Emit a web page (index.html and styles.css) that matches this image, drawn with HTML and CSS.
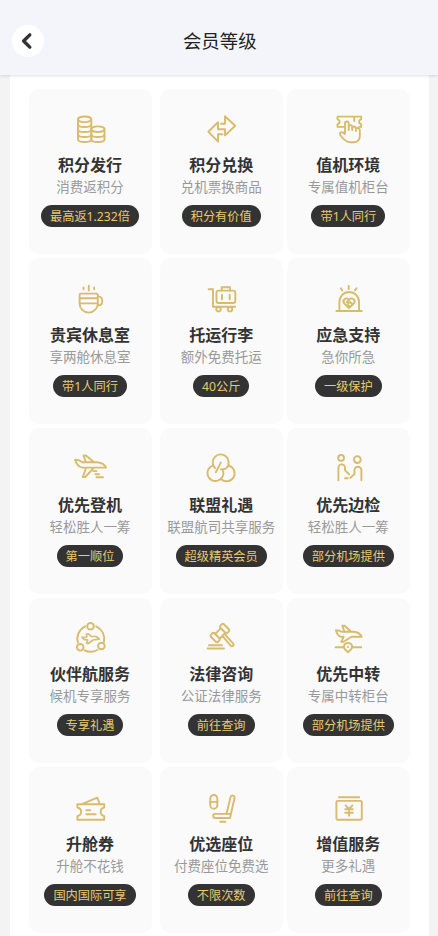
FILE: index.html
```html
<!DOCTYPE html>
<html lang="zh-CN">
<head>
    <meta charset="UTF-8">
    <meta name="viewport" content="width=device-width, initial-scale=1.0">
    <title>会员等级</title>
    <link rel="stylesheet" href="styles.css">
</head>
<body>
    <!-- Header -->
    <header class="header">
        <button class="back-button" aria-label="返回">
            <svg viewBox="0 0 32 32"><path d="M17.8 9.9 11.6 16 17.8 22.1"/></svg>
        </button>
        <h1 class="header-title">会员等级</h1>
    </header>

    <!-- Benefits -->
    <main class="panel">
        <div class="card">
            <svg class="icon" viewBox="0 0 36 36"><ellipse cx="11.6" cy="8.3" rx="6.6" ry="2.8"/><path d="M5 8.3V28.2C5 32 18.3 32 18.3 28.2V8.3M5 13.2C5 17 18.3 17 18.3 13.2M5 18.2C5 22 18.3 22 18.3 18.2M5 23.2C5 27 18.3 27 18.3 23.2"/><ellipse cx="24.9" cy="18.2" rx="6.6" ry="2.8"/><path d="M18.3 18.2V28.2C18.3 32 31.5 32 31.5 28.2V18.2M18.3 23.2C18.3 27 31.5 27 31.5 23.2"/></svg>
            <h2 class="card-title">积分发行</h2>
            <p class="card-desc">消费返积分</p>
            <span class="badge">最高返1.232倍</span>
        </div>
        <div class="card">
            <svg class="icon" viewBox="0 0 36 36"><path d="M17 12.7H21V5.3L31.2 14.8 21 24.4V18.3H14V11.2L4.3 20.7 14 30.6V23.3H18.4"/></svg>
            <h2 class="card-title">积分兑换</h2>
            <p class="card-desc">兑机票换商品</p>
            <span class="badge">积分有价值</span>
        </div>
        <div class="card">
            <svg class="icon" viewBox="0 0 36 36"><path d="M12.5 15.9H6.5V13.2C9.3 12.5 9.3 9 6.5 8.3V5.6H30.2V8.3C27.4 9 27.4 12.5 30.2 13.2V15.9H28M23.3 6V10"/><path d="M14 21.5V12.2C14 10 17.7 10 17.7 12.2V19M17.7 17V15.5C17.7 13.6 21.2 13.6 21.2 15.7V19M21.2 17.5C21.2 14.8 24.9 15 24.9 17.2V20M24.9 18.5C25.2 16.3 28.8 16.8 28.8 19V25C28.8 29.5 26 31.2 22.5 31.2H19.5C15.5 31.2 11.8 27.5 9.4 24.2 8 21.8 10 20.4 12 21.6L14 23"/></svg>
            <h2 class="card-title">值机环境</h2>
            <p class="card-desc">专属值机柜台</p>
            <span class="badge">带1人同行</span>
        </div>

        <div class="card">
            <svg class="icon" viewBox="0 0 36 36"><path d="M7.8 12.6H23.6Q24.8 12.6 24.8 14V22.5A9.1 9.1 0 0 1 6.6 22.5V14Q6.6 12.6 7.8 12.6ZM6.6 17.3H24.8M6.6 22.4H24.8M24.8 15.6H26Q29.3 16 29.3 20T26 24.3H24.8M10.5 6.5V8.2M15.8 4.7V9.5M21.2 6.5V8.2"/></svg>
            <h2 class="card-title">贵宾休息室</h2>
            <p class="card-desc">享两舱休息室</p>
            <span class="badge">带1人同行</span>
        </div>
        <div class="card">
            <svg class="icon" viewBox="0 0 36 36"><path d="M4.6 8.3H9V25.8H31.2M17.7 9.5V6.2H26V9.5M18 13.8V18.4M25.7 13.8V18.4"/><rect x="12.5" y="9.6" width="18.8" height="12.4" rx="2"/><circle cx="14.5" cy="28.2" r="2.2"/><circle cx="26" cy="28.2" r="2.2"/></svg>
            <h2 class="card-title">托运行李</h2>
            <p class="card-desc">额外免费托运</p>
            <span class="badge">40公斤</span>
        </div>
        <div class="card">
            <svg class="icon" viewBox="0 0 36 36"><path d="M5.4 30H30.8M8.4 29.5V20.8A9.8 9.8 0 0 1 28 20.8V29.5M17.7 5V8M9.9 7.2 11.3 9.4M25.6 7.2 24 9.4"/><path d="M18 27 13.3 22.5C10.7 18.8 15.5 15.3 18 19 20.7 15.3 25.3 18.8 22.8 22.5ZM18 19 15.8 21.2Q17.3 23 19 21L21.5 23.5M17 24 18.7 25.5"/></svg>
            <h2 class="card-title">应急支持</h2>
            <p class="card-desc">急你所急</p>
            <span class="badge">一级保护</span>
        </div>

        <div class="card">
            <svg class="icon" viewBox="0 0 36 36"><path d="M2 9.8 6.3 10.4 9.3 12.2H24C28.5 12.6 32 15 33 17.6H9.5C5.5 17 3 13.5 2 9.8ZM12.7 12 10.6 5.5H13L20.8 12M13 18 9.8 27H12.2L20.3 18.5M20.5 21.1H23.5M22.3 24.2H26M23.5 27.2H30"/></svg>
            <h2 class="card-title">优先登机</h2>
            <p class="card-desc">轻松胜人一筹</p>
            <span class="badge">第一顺位</span>
        </div>
        <div class="card">
            <svg class="icon" viewBox="0 0 36 36"><path d="M11 18A8 8 0 1 1 22.8 17.6M9.4 15.3A8 8 0 1 0 19 20.5M16.9 19.5C21 19.5 24.4 17.5 24.8 14.6M24.8 15.6A8 8 0 1 1 17.2 29.2M16.8 12.6 11.8 22.2"/></svg>
            <h2 class="card-title">联盟礼遇</h2>
            <p class="card-desc">联盟航司共享服务</p>
            <span class="badge">超级精英会员</span>
        </div>
        <div class="card">
            <svg class="icon" viewBox="0 0 36 36"><circle cx="10.1" cy="7.9" r="2.9"/><circle cx="26.3" cy="9.6" r="3.4"/><path d="M7.4 30.2V17.7A3.3 3.3 0 0 1 14 17.7V20.4L18.2 24.3M30.4 30.2V20.2A3.5 3.5 0 0 0 23.4 20.2V24L19.3 27.9M14 28.3H16.8"/></svg>
            <h2 class="card-title">优先边检</h2>
            <p class="card-desc">轻松胜人一筹</p>
            <span class="badge">部分机场提供</span>
        </div>

        <div class="card">
            <svg class="icon" viewBox="0 0 36 36"><circle cx="17.5" cy="6.3" r="3.3"/><circle cx="7.2" cy="27.3" r="3.3"/><circle cx="28.4" cy="26" r="3.3"/><path d="M12.2 6.3A14 14 0 0 0 4.8 22.5M23.2 6.3A14 14 0 0 1 31 21.8M11.5 30.3Q17.8 33.5 24.5 30"/><path class="thin" d="M9 17.2 13.8 17 13.4 14 15.3 13.8 18.4 16.4 23 16.5 26.5 19 20 20 15.3 23.5 13.5 23.3 14.8 20 11 19.4Z"/></svg>
            <h2 class="card-title">伙伴航服务</h2>
            <p class="card-desc">候机专享服务</p>
            <span class="badge">专享礼遇</span>
        </div>
        <div class="card">
            <svg class="icon" viewBox="0 0 36 36"><rect x="15.6" y="6" width="10" height="5" rx="1.5" transform="rotate(45 20.6 8.5)"/><rect x="6.2" y="15" width="10" height="5" rx="1.5" transform="rotate(45 11.2 17.5)"/><path d="M16.2 8.9 11 14.2M20.9 13.2 15.5 18.8M18.6 16.2 26.8 25.8Q28 26.8 29.1 25.8T29 23.4L20.6 14.2M5 25.2H18M3.6 28.5H20"/></svg>
            <h2 class="card-title">法律咨询</h2>
            <p class="card-desc">公证法律服务</p>
            <span class="badge">前往查询</span>
        </div>
        <div class="card">
            <svg class="icon" viewBox="0 0 36 36"><path d="M5 10.2 8.6 10.8 11 11.8H22.5C26.8 12.2 29.8 14.2 30.7 16.8H20.5L12.6 21.8H10.2L12.7 16.8H10C7 16 5.5 13 5 10.2ZM13.5 11.5 11.3 5.8H13.6L20 11.5M4.6 27.2H12.7M21.3 27.2H30.2"/><path d="M17 32.2 13.9 29.2C11.4 25.8 14 23 17 23S22.6 25.8 20.1 29.2Z"/><circle class="dot" cx="17" cy="27" r="1.1"/></svg>
            <h2 class="card-title">优先中转</h2>
            <p class="card-desc">专属中转柜台</p>
            <span class="badge">部分机场提供</span>
        </div>

        <div class="card">
            <svg class="icon" viewBox="0 0 36 36"><path d="M4.4 14.2H31.2V17.5C26.4 18.5 26.4 25.2 31.2 26.2V29.8H4.4V26.2C9.4 25.2 9.4 18.5 4.4 17.5ZM9.5 13.8 24.3 7.7 26.6 13.8M13.3 20.3H17.3M13.3 24.3H22.7"/></svg>
            <h2 class="card-title">升舱券</h2>
            <p class="card-desc">升舱不花钱</p>
            <span class="badge">国内国际可享</span>
        </div>
        <div class="card">
            <svg class="icon" viewBox="0 0 36 36"><rect x="6.3" y="5" width="7" height="13.7" rx="3.5"/><path d="M6.3 11.9H13.3M22.5 24 26.4 7.4C27.2 4.3 31.2 5.3 30.5 8.3L26 28H11.2A2.05 2.05 0 0 1 11.2 23.9H26.5M16.3 31.8H21.3"/></svg>
            <h2 class="card-title">优选座位</h2>
            <p class="card-desc">付费座位免费选</p>
            <span class="badge">不限次数</span>
        </div>
        <div class="card">
            <svg class="icon" viewBox="0 0 36 36"><rect x="5.4" y="10.9" width="25.4" height="18.9" rx="1.3"/><path d="M8 7.2H28.2M14.6 15.4 18 19 21.4 15.4M14.2 19.3H21.8M14.2 22.7H21.8M18 19V25.8"/></svg>
            <h2 class="card-title">增值服务</h2>
            <p class="card-desc">更多礼遇</p>
            <span class="badge">前往查询</span>
        </div>
    </main>
</body>
</html>
```

FILE: styles.css
```css
* {
    box-sizing: border-box;
}

body {
    font-family: "Noto Sans CJK SC", sans-serif;
    background-color: #f3f3f3;
    height: 936px;
    margin: 0;
    overflow: hidden;
}

.header {
    position: relative;
    display: grid;
    grid-template-columns: 32px 1fr 32px;
    align-items: center;
    height: 74.5px;
    padding: 8px 10px 0 11.5px;
    background: #f4f5fa;
    box-shadow: 0 1px 3px rgba(0, 0, 0, 0.13);
}

.back-button {
    width: 32px;
    height: 32px;
    padding: 0;
    border: none;
    border-radius: 50%;
    background: #fff;
    cursor: pointer;
}

.back-button svg {
    display: block;
    width: 32px;
    height: 32px;
    fill: none;
    stroke: #333;
    stroke-width: 3.4;
    stroke-linecap: round;
    stroke-linejoin: round;
}

.header-title {
    margin: 0 0 2.5px;
    color: #222;
    font-size: 18.4px;
    font-weight: 400;
    line-height: 28px;
    text-align: center;
}

.panel {
    display: grid;
    grid-template-columns: 127px 123px 123px;
    grid-auto-rows: 165.6px;
    column-gap: 4.2px;
    row-gap: 4.1px;
    height: 870px;
    margin: 0 9.3px 0 10.3px;
    padding: 14.2px 0 0 18.7px;
    background: #fff;
}

.card {
    display: flex;
    flex-direction: column;
    align-items: center;
    width: 123px;
    padding: 22.3px 1px 0 0;
    border-radius: 10px;
    background: #fafafa;
    white-space: nowrap;
}

.icon {
    width: 36px;
    height: 36px;
    margin: 0 0 6.2px 2px;
    fill: none;
    stroke: #d8bb6c;
    stroke-width: 1.9;
    stroke-linecap: round;
    stroke-linejoin: round;
}

.icon .thin {
    stroke-width: 1.6;
}

.icon .dot {
    fill: #d8bb6c;
    stroke: none;
}

.card-title {
    margin: 0;
    color: #333;
    font-size: 16px;
    font-weight: 700;
    line-height: 22px;
}

.card-desc {
    margin: 0 0 8px;
    color: #999;
    font-size: 13.5px;
    line-height: 22px;
}

.badge {
    height: 22px;
    padding: 0 9px;
    border-radius: 11px;
    background: #333;
    color: #e9c96e;
    font-family: "Noto Sans", "Noto Sans CJK SC", sans-serif;
    font-size: 12.2px;
    line-height: 23px;
}
```
